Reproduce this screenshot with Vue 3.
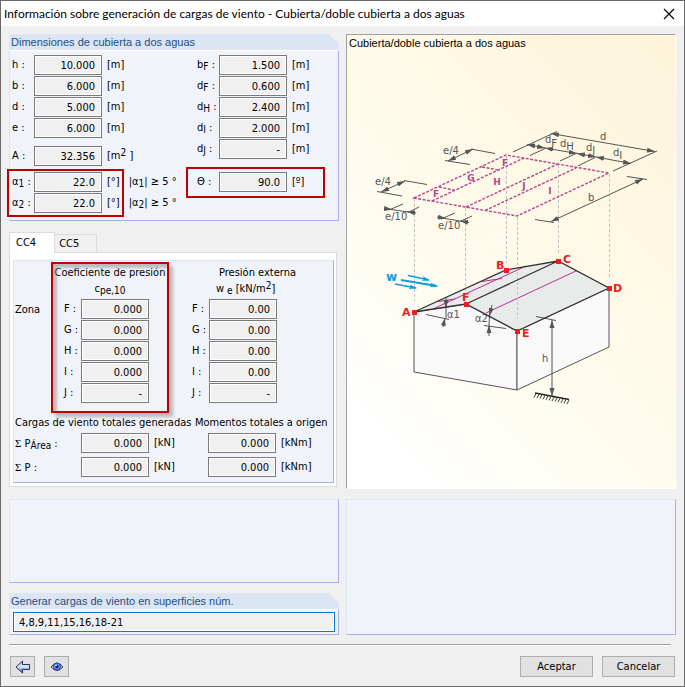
<script setup>
import { ref } from 'vue'

const leftDims = [
  { id: 'h', name: 'h', value: '10.000' },
  { id: 'b', name: 'b', value: '6.000' },
  { id: 'd', name: 'd', value: '5.000' },
  { id: 'e', name: 'e', value: '6.000' },
]
const rightDims = [
  { id: 'bf', name: 'b', sub: 'F', value: '1.500' },
  { id: 'df', name: 'd', sub: 'F', value: '0.600' },
  { id: 'dh', name: 'd', sub: 'H', value: '2.400' },
  { id: 'di', name: 'd', sub: 'I', value: '2.000' },
  { id: 'dj', name: 'd', sub: 'J', value: '-' },
]
const angles = [
  { id: 'a1', sub: '1', value: '22.0' },
  { id: 'a2', sub: '2', value: '22.0' },
]
const zones = [
  { name: 'F', cpe: '0.000', we: '0.00' },
  { name: 'G', cpe: '0.000', we: '0.00' },
  { name: 'H', cpe: '0.000', we: '0.00' },
  { name: 'I', cpe: '0.000', we: '0.00' },
  { name: 'J', cpe: '-', we: '-' },
]
const totals = [
  { id: 'area', sub: 'Área', force: '0.000', moment: '0.000' },
  { id: 'sum', sub: '', force: '0.000', moment: '0.000' },
]
const tabs = ['CC4', 'CC5']
const activeTab = ref('CC4')
const surfaces = ref('4,8,9,11,15,16,18-21')

const corners = [
  { name: 'A', x: 414, y: 312, tx: 402, ty: 316 },
  { name: 'F', x: 466, y: 304, tx: 462, ty: 301 },
  { name: 'B', x: 506, y: 270, tx: 496, ty: 269 },
  { name: 'E', x: 517, y: 331, tx: 522, ty: 337 },
  { name: 'C', x: 558, y: 261, tx: 563, ty: 263 },
  { name: 'D', x: 609, y: 288, tx: 613, ty: 292 },
]
const zoneMarks = [
  { t: 'F', x: 436, y: 197 },
  { t: 'G', x: 471, y: 181 },
  { t: 'H', x: 497, y: 185 },
  { t: 'F', x: 505, y: 166 },
  { t: 'J', x: 524, y: 189 },
  { t: 'I', x: 550, y: 194 },
]
const hatch = Array.from({ length: 12 }, (_, i) => ({ x: 536 + i * 3, y: 393.5 + i * 0.6 }))
</script>

<template>
  <div class="dialog">
    <header class="titlebar">
      <h1>Información sobre generación de cargas de viento - Cubierta/doble cubierta a dos aguas</h1>
      <button class="close" type="button" aria-label="Cerrar">
        <svg viewBox="0 0 12 12"><path d="M1 1L11 11M11 1L1 11" /></svg>
      </button>
    </header>

    <main class="content">
      <div class="column">
        <section class="group">
          <h2 class="group-title">Dimensiones de cubierta a dos aguas</h2>
          <div class="panel dims">
            <div class="stack">
              <div v-for="d in leftDims" :key="d.id" class="row">
                <label class="tag" :for="d.id">{{ d.name }} :</label>
                <input :id="d.id" class="num" :value="d.value" readonly />
                <span class="unit">[m]</span>
              </div>
              <div class="row area">
                <label class="tag" for="area-a">A :</label>
                <input id="area-a" class="num" value="32.356" readonly />
                <span class="unit">[m<sup>2</sup> ]</span>
              </div>
              <div class="angles">
                <div class="stack marked marked-angles">
                  <div v-for="a in angles" :key="a.id" class="row">
                    <label class="tag" :for="a.id">α<sub>{{ a.sub }}</sub> :</label>
                    <input :id="a.id" class="num" :value="a.value" readonly />
                    <span class="unit">[°]</span>
                  </div>
                </div>
                <div class="stack">
                  <span v-for="a in angles" :key="a.id" class="limit">|α<sub>{{ a.sub }}</sub>| ≥ 5 °</span>
                </div>
              </div>
            </div>
            <div class="stack">
              <div v-for="d in rightDims" :key="d.id" class="row">
                <label class="tag" :for="d.id">{{ d.name }}<sub>{{ d.sub }}</sub> :</label>
                <input :id="d.id" class="num" :value="d.value" readonly />
                <span class="unit">[m]</span>
              </div>
              <div class="row theta marked marked-theta">
                <label class="tag" for="theta">Θ :</label>
                <input id="theta" class="num" value="90.0" readonly />
                <span class="unit">[º]</span>
              </div>
            </div>
          </div>
        </section>

        <section class="tabs">
          <div class="tablist" role="tablist">
            <button
              v-for="t in tabs"
              :key="t"
              type="button"
              role="tab"
              class="tab"
              :class="{ active: t === activeTab }"
              :aria-selected="t === activeTab"
              @click="activeTab = t"
            >{{ t }}</button>
          </div>
          <div class="page" role="tabpanel">
            <div class="panel results">
              <div class="zones">
                <span class="zone-title">Zona</span>
                <div class="coef">
                  <h3>Coeficiente de presión</h3>
                  <p>c<sub>pe,10</sub></p>
                  <div class="stack">
                    <div v-for="z in zones" :key="z.name" class="row">
                      <label class="ztag" :for="'cpe' + z.name">{{ z.name }} :</label>
                      <input :id="'cpe' + z.name" class="num" :value="z.cpe" readonly />
                    </div>
                  </div>
                </div>
                <div class="external">
                  <h3>Presión externa</h3>
                  <p>w<sub> e</sub> [kN/m<sup>2</sup>]</p>
                  <div class="stack">
                    <div v-for="z in zones" :key="z.name" class="row">
                      <label class="ztag" :for="'we' + z.name">{{ z.name }} :</label>
                      <input :id="'we' + z.name" class="num" :value="z.we" readonly />
                    </div>
                  </div>
                </div>
              </div>
              <div class="total-heads">
                <h3>Cargas de viento totales generadas</h3>
                <h3>Momentos totales a origen</h3>
              </div>
              <div class="totals">
                <div v-for="t in totals" :key="t.id" class="row">
                  <label class="sum" :for="'force-' + t.id"><span class="sigma">Σ</span> P<sub>{{ t.sub }}</sub> :</label>
                  <input :id="'force-' + t.id" class="num" :value="t.force" readonly />
                  <span class="unit force">[kN]</span>
                  <input class="num" :value="t.moment" aria-label="Momento total" readonly />
                  <span class="unit">[kNm]</span>
                </div>
              </div>
            </div>
          </div>
        </section>
      </div>

      <figure class="picture">
        <figcaption>Cubierta/doble cubierta a dos aguas</figcaption>
        <svg class="drawing" viewBox="347 52 328 436" role="img" aria-label="Esquema de zonas de cubierta">
          <defs>
            <marker id="tip" viewBox="0 0 8 6" refX="8" refY="3" markerWidth="8" markerHeight="6" markerUnits="userSpaceOnUse" orient="auto-start-reverse">
              <path class="tip" d="M0 .5L8 3L0 5.5Z" />
            </marker>
            <marker id="wind" viewBox="0 0 8 6" refX="7" refY="3" markerWidth="8" markerHeight="6" markerUnits="userSpaceOnUse" orient="auto">
              <path class="wind-tip" d="M0 .5L8 3L0 5.5L2 3Z" />
            </marker>
          </defs>

          <!-- building -->
          <path class="wall" d="M414 312L466 304L517 331V390L414 372Z" />
          <path class="wall" d="M517 331L609 288V347L517 390Z" />
          <path class="roof" d="M414 312L506 270L558 261L466 304Z" />
          <path class="roof" d="M466 304L558 261L609 288L517 331Z" />
          <path class="thin-zone" d="M433 309L526 266M438 301.500L455 299M482 281.500L502 278.500M486 313L577 270.500" />

          <!-- projection lines -->
          <path class="proj" d="M414.500 199V301M465.500 208V296M506.500 156V263M517.500 217V319M558.500 165V253M609.500 174V277" />

          <!-- roof plan -->
          <path class="plan" d="M414 198L506 155L609 173L517 216Z" />
          <path class="plan" d="M432 201L524 158M466 207L558 164M485 210.500L576 168M439 187L454 190M482 167L499 170" />
          <text v-for="(m, i) in zoneMarks" :key="i" class="zmark" :x="m.x" :y="m.y">{{ m.t }}</text>

          <!-- dimension lines -->
          <g class="dim">
            <path d="M404 180.500L427 184.500M377 191.500L402 196M471 149L495 153.500M445 160.500L470 164.500" />
            <path d="M403 204L389 210M419 207L408 212.500M455 213L441 219M472 216L460 221.500" />
            <path d="M513 152L557 131.500M613 171L657 151M530 155.500L545 148.500M560 161L577 153M578 166L595 157.500" />
            <path d="M535 219.500L554 222.500M627 176.500L647 179.500M536 316.500L556 320.500M426 314.500L449 319.500M484 325.500L506 328.500" />
            <path class="both" d="M381 192L405 181" />
            <path class="both" d="M448 161L473 149" />
            <path class="both" d="M551 133.500L655 151.500" />
            <path class="both" d="M551 221.500L643 179" />
            <path class="both" d="M552 320V396" />
            <path class="both" d="M527 144.500L545 148" />
            <path class="both" d="M545 148L577 153.500" />
            <path class="both" d="M577 153.500L596 157" />
            <path class="both" d="M596 157L631 163.500" />
            <path class="end" d="M384 208.500L392 209.500" />
            <path class="end" d="M416 213L407 211.500" />
            <path d="M391 209.500L408 212M445 218.500L460 221" />
            <path class="end" d="M437 217L446 218.500" />
            <path class="end" d="M469 222.500L460 221" />
            <path class="end" d="M446 298L446 308" />
            <path class="end" d="M443 327L445 318" />
            <path d="M446 308V318" />
            <path class="end" d="M492 305L489.500 316" />
            <path class="end" d="M489 336V325" />
            <path d="M489.500 316L489 325" />
          </g>
          <g class="dtext">
            <text x="375" y="185">e/4</text>
            <text x="443" y="154">e/4</text>
            <text x="385" y="220">e/10</text>
            <text x="438" y="229">e/10</text>
            <text x="600" y="140">d</text>
            <text x="545" y="143">d<tspan dy="4">F</tspan></text>
            <text x="560" y="147">d<tspan dy="3">H</tspan></text>
            <text x="586" y="151">d<tspan dy="3">J</tspan></text>
            <text x="613" y="156">d<tspan dy="3">I</tspan></text>
            <text x="588" y="201">b</text>
            <text x="542" y="362">h</text>
            <text x="447" y="318">α1</text>
            <text x="475" y="322">α2</text>
          </g>
          <path class="ground" d="M535 393L569 399.500" />
          <path v-for="(g, i) in hatch" :key="i" class="ground-tick" :d="`M${g.x} ${g.y}l-2 4`" />

          <!-- roof edges -->
          <path class="edge" d="M414 312L506 270L558 261L609 288L517 331L466 304L414 312M466 304L558 261" />

          <!-- wind -->
          <path class="wind" d="M408 275.500L429 280" />
          <path class="wind thick" d="M401 280L437 286" />
          <path class="wind" d="M395 284L416 288" />
          <text class="wmark" x="386" y="281">w</text>

          <g v-for="c in corners" :key="c.name" class="corner">
            <rect :x="c.x - 2" :y="c.y - 2" width="5" height="5" />
            <text :x="c.tx" :y="c.ty">{{ c.name }}</text>
          </g>
        </svg>
      </figure>

      <div class="column lower">
        <div class="panel blank"></div>
        <section class="group">
          <h2 class="group-title"><label for="surfaces">Generar cargas de viento en superficies núm.</label></h2>
          <div class="panel surfaces">
            <input id="surfaces" v-model="surfaces" class="wide" />
          </div>
        </section>
      </div>
      <div class="panel"></div>
    </main>

    <hr class="rule" />
    <footer class="footer">
      <button class="btn icon" type="button" aria-label="Atrás">
        <svg viewBox="0 0 16 14">
          <defs>
            <linearGradient id="blue" x1="0" y1="0" x2="0" y2="1">
              <stop offset="0" stop-color="#8ea6e0" />
              <stop offset=".45" stop-color="#dfe9ff" />
              <stop offset="1" stop-color="#2f56cc" />
            </linearGradient>
          </defs>
          <path d="M1 7L7.500 1V4.500H14.500V9.500H7.500V13Z" fill="url(#blue)" stroke="#2a3354" />
        </svg>
      </button>
      <button class="btn icon" type="button" aria-label="Ver">
        <svg viewBox="0 0 16 14">
          <path d="M2 7Q8 -1 14 7Q8 14 2 7Z" fill="#c4c8d4" stroke="#3a3a44" />
          <circle cx="8" cy="6.500" r="3.500" fill="#5b86f4" stroke="#2446b8" />
          <circle cx="8" cy="6.500" r="1.500" fill="#0c1440" />
          <circle cx="7" cy="5.500" r=".8" fill="#fff" />
        </svg>
      </button>
      <span class="spacer"></span>
      <button class="btn" type="button">Aceptar</button>
      <button class="btn" type="button">Cancelar</button>
    </footer>
  </div>
</template>

<style>
body {
  background: #f0f0f0;
}
</style>

<style scoped>
.dialog {
  box-sizing: border-box;
  min-height: 100vh;
  display: flex;
  flex-direction: column;
  border: 1px solid #6b6b6b;
  background: #f0f0f0;
  color: #000;
  font: 11px/16px "DejaVu Sans Condensed", "Noto Sans", sans-serif;
}
.dialog * {
  box-sizing: border-box;
}
h1, h2, h3, p, figure {
  margin: 0;
  font-weight: normal;
  font-size: inherit;
}
input, button {
  font: inherit;
  color: inherit;
}
.titlebar {
  display: flex;
  align-items: center;
  height: 25px;
  padding: 0 4px 0 3px;
  background: #fff;
}
.titlebar h1 {
  flex: 1;
  font: 12px/24px Lato, "Open Sans", sans-serif;
  white-space: nowrap;
}
.close {
  width: 22px;
  height: 24px;
  padding: 0;
  border: 0;
  background: none;
}
.close svg {
  display: block;
  width: 12px;
  margin: auto;
}
.close path {
  stroke: #000;
  stroke-width: 1.2;
}
.content {
  flex: 1;
  display: grid;
  grid-template-columns: 1fr 1fr;
  grid-template-rows: auto 1fr;
  gap: 10px 7px;
  padding: 8px 8px 0;
}
.column {
  display: flex;
  flex-direction: column;
  gap: 10px;
  min-width: 0;
}
.panel {
  background: #f0f4fa;
  border: 1px solid #dce5f5;
  border-right-color: #aaaaee;
  border-bottom-color: #aaaaee;
}
.group-title {
  height: 16px;
  padding-left: 2px;
  background: #dce5f4;
  clip-path: polygon(0 0, calc(100% - 10px) 0, 100% 10px, 100% 100%, 0 100%);
  color: #1f4e80;
  font: 11px/16px "Liberation Sans", sans-serif;
}
.dims {
  display: grid;
  grid-template-columns: 185px 1fr;
  padding: 4px 2px 7px;
  border-top-color: #fff;
}
.stack {
  display: flex;
  flex-direction: column;
  gap: 1px;
}
.row {
  display: flex;
  align-items: center;
  height: 20px;
}
.tag {
  width: 22px;
  white-space: nowrap;
}
sub, sup {
  font-size: 10px;
  line-height: 0;
}
sub {
  vertical-align: -2px;
}
sup {
  vertical-align: 3px;
}
.num {
  width: 68px;
  height: 20px;
  padding: 0 6px;
  border: 1px solid #7a7a7a;
  background: #f0f0f0;
  box-shadow: inset 0 0 0 1px #fff;
  text-align: right;
}
.unit {
  padding-left: 5px;
  white-space: nowrap;
}
.area {
  margin-top: 7px;
}
.angles {
  display: flex;
  gap: 9px;
  margin-top: 5px;
}
.limit {
  height: 20px;
  line-height: 20px;
}
.theta {
  margin-top: 12px;
}
.marked {
  position: relative;
}
.marked::after {
  content: "";
  position: absolute;
  border: 2px solid #c00000;
}
.marked-angles::after {
  inset: -3px -4px -4px -5px;
}
.marked-theta::after {
  inset: -5px 11px -6px -11px;
}
.tabs {
  display: flex;
  flex-direction: column;
}
.tablist {
  display: flex;
  align-items: flex-end;
  height: 21px;
}
.tab {
  height: 18px;
  padding: 0 17px 0 4px;
  border: 1px solid #dcdcdc;
  border-left: 0;
  border-bottom: 0;
  background: #f0f0f0;
}
.tab.active {
  position: relative;
  height: 21px;
  margin-bottom: -1px;
  padding: 0 18px 0 6px;
  border-left: 1px solid #dcdcdc;
  background: #fff;
}
.page {
  margin-right: 2px;
  padding: 7px 2px 3px 3px;
  border: 1px solid #dcdcdc;
  background: #fff;
}
.results {
  padding: 0 1px 5px;
}
.zones {
  display: grid;
  grid-template-columns: 36px 118px 1fr;
}
.zone-title {
  padding-top: 41px;
}
.zones h3, .zones p {
  height: 16px;
  white-space: nowrap;
}
.coef {
  position: relative;
  padding: 4px 0 10px 13px;
}
.coef::after {
  content: "";
  position: absolute;
  inset: 1px 0 0;
  border: 2px solid #c00000;
  box-shadow: 4px 4px 3px #8888, inset 4px 4px 3px #8888;
}
.coef h3, .coef p {
  margin-left: -13px;
  text-align: center;
}
.external {
  padding: 4px 0 0 23px;
}
.external h3 {
  padding-left: 27px;
}
.external p {
  padding-left: 24px;
}
.zones .stack {
  margin-top: 2px;
}
.ztag {
  width: 17px;
  white-space: nowrap;
}
.total-heads {
  display: grid;
  grid-template-columns: 180px 1fr;
  margin-top: 2px;
  white-space: nowrap;
}
.totals {
  display: flex;
  flex-direction: column;
  gap: 4px;
  margin-top: 2px;
}
.sum {
  width: 66px;
  white-space: nowrap;
}
.sigma {
  font-family: "Liberation Serif", serif;
}
.force {
  width: 59px;
}
.picture {
  border: 1px solid #fff;
  border-top-color: #a0a0a0;
  border-left-color: #a0a0a0;
  background: linear-gradient(225deg, #fdf4d9, #fffbec 55%, #fff 90%);
}
.picture figcaption {
  height: 17px;
  padding-left: 2px;
  font: 11px/17px "Liberation Sans", sans-serif;
}
.drawing {
  display: block;
  width: 100%;
}
.drawing path {
  fill: none;
}
.drawing .tip {
  fill: #555;
  stroke: none;
}
.drawing .wind-tip {
  fill: #0a9ee0;
}
.drawing .wall {
  fill: #f9f9f9;
  stroke: #555;
}
.drawing .roof {
  fill: #e8ebea;
}
.thin-zone {
  stroke: #b5338a;
}
.proj {
  stroke: #c2c2c2;
  stroke-dasharray: 3 2;
}
.plan {
  stroke: #b8468c;
  stroke-width: 1.4;
  stroke-dasharray: 3 1.5;
}
.zmark {
  fill: #b8468c;
  font: bold 9px "DejaVu Sans", sans-serif;
  text-anchor: middle;
}
.dim path {
  stroke: #555;
}
.dim .both {
  marker-start: url(#tip);
  marker-end: url(#tip);
}
.dim .end {
  marker-end: url(#tip);
}
.dtext text {
  fill: #555;
  font: 10px "DejaVu Sans", sans-serif;
}
.ground {
  stroke: #222;
  stroke-width: 1.5;
}
.ground-tick {
  stroke: #444;
}
.edge {
  stroke: #333;
  stroke-width: 1.3;
}
.wind {
  stroke: #0a9ee0;
  stroke-width: 1.3;
  marker-end: url(#wind);
}
.thick {
  stroke-width: 2;
}
.wmark {
  fill: #0a9ee0;
  font: bold 12px "DejaVu Sans", sans-serif;
}
.corner {
  fill: #ea1c24;
  font: bold 11px "DejaVu Sans", sans-serif;
}
.blank {
  flex: 1;
  min-height: 83px;
}
.surfaces {
  padding: 2px 3px;
  border-top-color: #fff;
}
.wide {
  display: block;
  width: 100%;
  height: 20px;
  padding: 0 5px;
  border: 1px solid #0078d7;
  background: #f0f0f0;
  box-shadow: inset 0 0 0 1px #fff;
}
.rule {
  width: auto;
  height: 2px;
  margin: 9px 13px 0 8px;
  border: 0;
  border-top: 1px solid #a0a0a0;
  border-bottom: 1px solid #fff;
}
.footer {
  display: flex;
  align-items: center;
  gap: 9px;
  padding: 10px 9px 9px;
}
.btn {
  width: 73px;
  height: 21px;
  padding: 0;
  border: 1px solid #adadad;
  background: #e1e1e1;
}
.icon {
  width: 25px;
}
.icon svg {
  display: block;
  width: 16px;
  margin: auto;
}
.spacer {
  flex: 1;
}
</style>
